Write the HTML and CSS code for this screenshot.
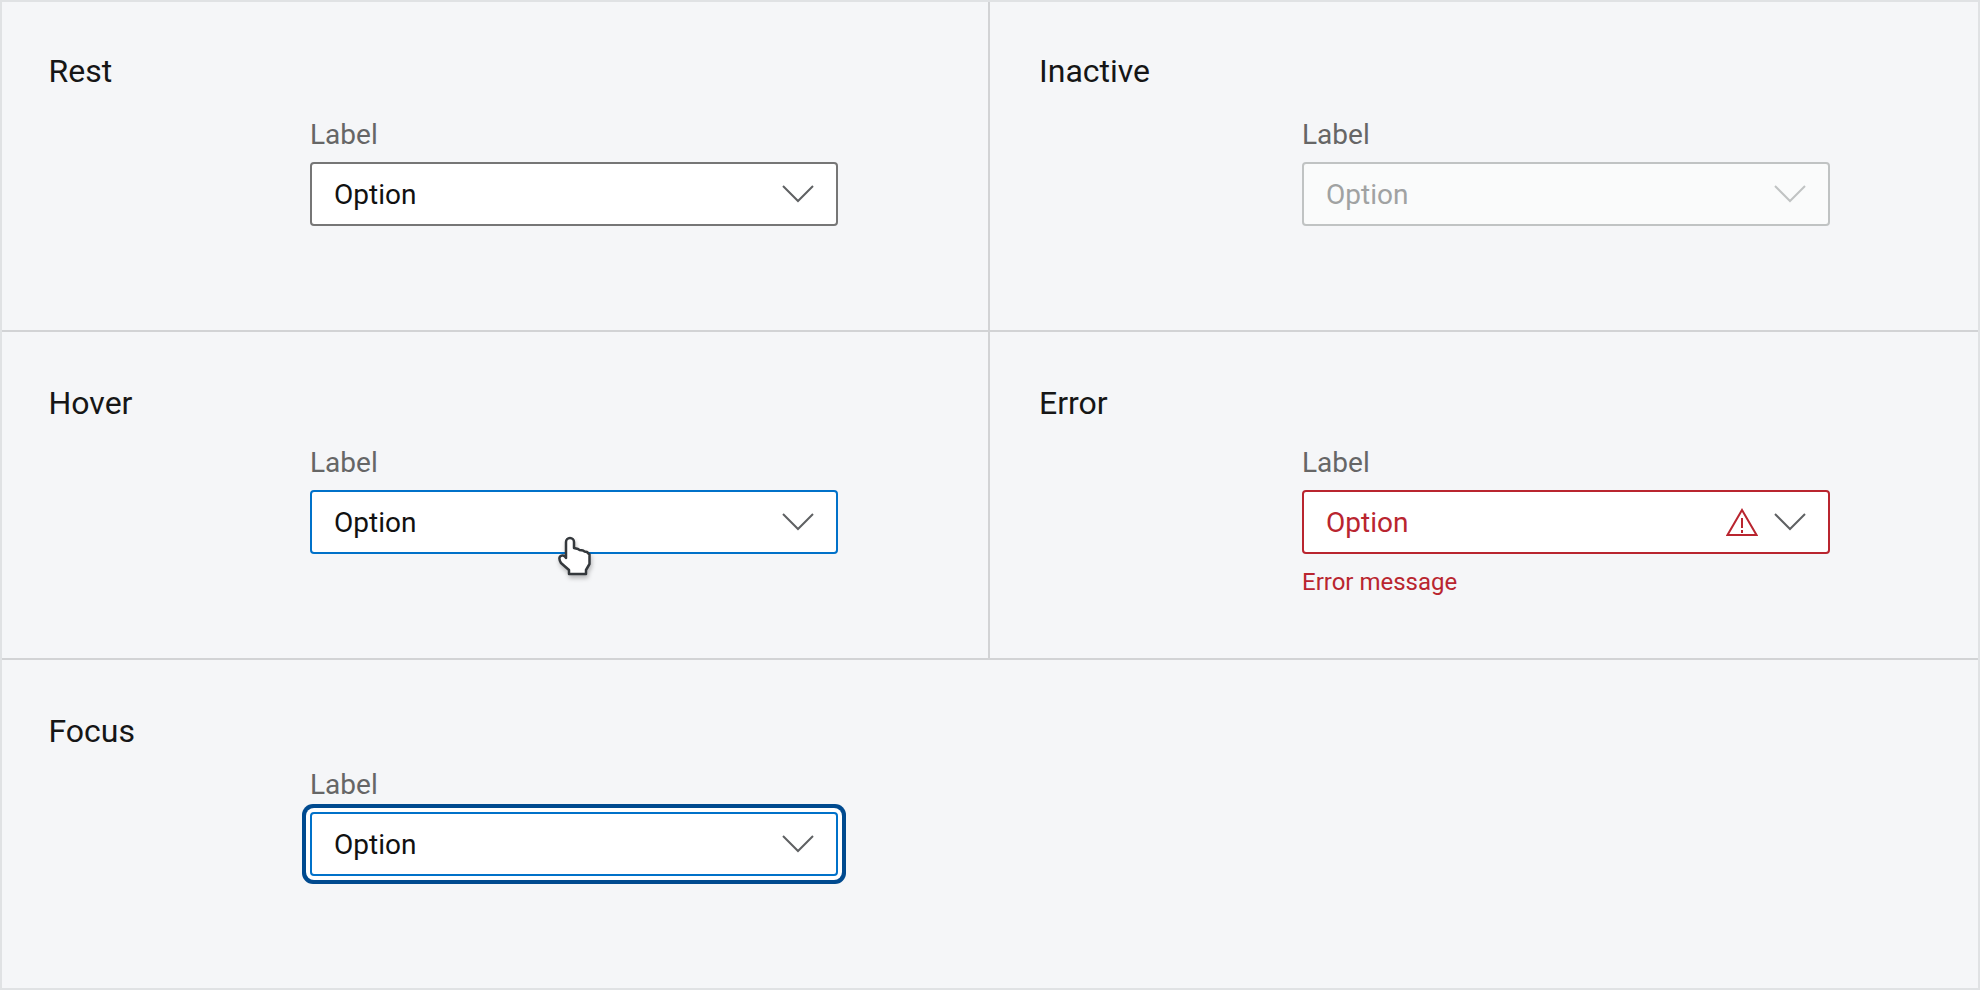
FILE: index.html
```html
<!DOCTYPE html>
<html lang="en">
<head>
    <meta charset="UTF-8">
    <title>Select states</title>
    <link rel="stylesheet" href="styles.css">
</head>
<body>

    <div class="states">

        <!-- REST -->
        <div class="cell cell-left cell-first">
            <div class="state-title">Rest</div>
            <div class="field">
                <div class="field-label">Label</div>
                <div class="select select-rest">
                    <span class="select-value">Option</span>
                    <svg class="chevron" viewBox="0 0 32 18"><polyline points="1,1 16,16 31,1"/></svg>
                </div>
            </div>
        </div>

        <!-- INACTIVE -->
        <div class="cell cell-right cell-first">
            <div class="state-title">Inactive</div>
            <div class="field">
                <div class="field-label">Label</div>
                <div class="select select-inactive">
                    <span class="select-value">Option</span>
                    <svg class="chevron" viewBox="0 0 32 18"><polyline points="1,1 16,16 31,1"/></svg>
                </div>
            </div>
        </div>

        <!-- HOVER -->
        <div class="cell cell-left cell-second">
            <div class="state-title">Hover</div>
            <div class="field">
                <div class="field-label">Label</div>
                <div class="select select-hover">
                    <span class="select-value">Option</span>
                    <svg class="chevron" viewBox="0 0 32 18"><polyline points="1,1 16,16 31,1"/></svg>
                    <svg class="hand" viewBox="0 0 80 60">
                        <path d="M26 36V22a4 4 0 0 1 8 0V28l4 1 1.500 1 3.500 .5 1.500 1 2.500 .5 2.500 2.500V44L46 50V54H29V50L21 43C18.500 39 19 36 22 35.500C24 35 25 36 26 38Z"/>
                    </svg>
                </div>
            </div>
        </div>

        <!-- ERROR -->
        <div class="cell cell-right cell-second">
            <div class="state-title">Error</div>
            <div class="field">
                <div class="field-label">Label</div>
                <div class="select select-error">
                    <span class="select-value">Option</span>
                    <svg class="warning" viewBox="0 0 32 28">
                        <path class="warning-outline" d="M16 2L30.500 27H1.500Z"/>
                        <path class="warning-mark" d="M16 10V20M16 22V25"/>
                    </svg>
                    <svg class="chevron" viewBox="0 0 32 18"><polyline points="1,1 16,16 31,1"/></svg>
                </div>
                <div class="error-message">Error message</div>
            </div>
        </div>

        <!-- FOCUS -->
        <div class="cell cell-wide">
            <div class="state-title">Focus</div>
            <div class="field field-focus">
                <div class="field-label">Label</div>
                <div class="select select-focus">
                    <span class="select-value">Option</span>
                    <svg class="chevron" viewBox="0 0 32 18"><polyline points="1,1 16,16 31,1"/></svg>
                </div>
            </div>
        </div>

    </div>

</body>
</html>
```

FILE: styles.css
```css
* {
    box-sizing: border-box;
}

body {
    margin: 0;
    font-family: Roboto, "Liberation Sans", sans-serif;
    background: #f5f6f8;
}

.states {
    width: 1980px;
    height: 990px;
    border: 2px solid #e0e2e4;
    display: grid;
    grid-template-columns: 988px 1fr;
    grid-template-rows: 330px 328px 1fr;
}

/* CELLS */
.cell {
    padding-top: 53px;
    border-bottom: 2px solid #d2d3d5;
}

.cell-first {
    padding-top: 51px;
}

.cell-left {
    padding-left: 46.500px;
    border-right: 2px solid #d2d3d5;
}

.cell-right {
    padding-left: 49px;
}

.cell-wide {
    grid-column: span 2;
    padding-left: 46.500px;
    border-bottom: none;
}

.state-title {
    font-size: 32px;
    line-height: 36px;
    color: #161616;
}

/* FIELD */
.field {
    width: 528px;
    margin-left: 261.500px;
    margin-top: 26px;
}

.cell-first .field {
    margin-top: 30px;
}

.cell-right .field {
    margin-left: 263px;
}

.field-focus {
    margin-top: 20px;
}

.field-label {
    font-size: 28px;
    line-height: 32px;
    color: #666;
    margin-bottom: 11px;
}

/* SELECT */
.select {
    position: relative;
    height: 64px;
    padding: 0 22px;
    display: flex;
    align-items: center;
    gap: 16px;
    background: #fff;
    border: 2px solid #767676;
    border-radius: 4px;
    font-size: 28px;
    color: #111;
}

.select-value {
    flex: 1;
}

.select-inactive {
    background: #fafbfb;
    border-color: #c0c3c3;
    color: #a0a2a2;
}

.select-hover {
    border-color: #0071c9;
}

.select-error {
    border-color: #b9252f;
    color: #b9252f;
}

.select-focus {
    border-color: #0071c9;
    box-shadow: 0 0 0 4px #fff, 0 0 0 8px #004a8f;
}

/* ICONS */
.chevron {
    width: 32px;
    height: 18px;
    fill: none;
    stroke: #5f6163;
    stroke-width: 2;
}

.select-inactive .chevron {
    stroke: #c0c3c3;
}

.warning {
    width: 32px;
    height: 28px;
    fill: none;
    stroke: #b9252f;
    stroke-width: 2;
}

.hand {
    position: absolute;
    left: 228px;
    top: 28px;
    width: 80px;
    height: 60px;
    fill: #fff;
    stroke: #34383c;
    stroke-width: 2.500;
    stroke-linejoin: round;
    filter: drop-shadow(1px 3px 2px rgba(0, 0, 0, 0.25));
}

.error-message {
    margin-top: 13px;
    font-size: 24px;
    line-height: 30px;
    color: #b9252f;
}
```
